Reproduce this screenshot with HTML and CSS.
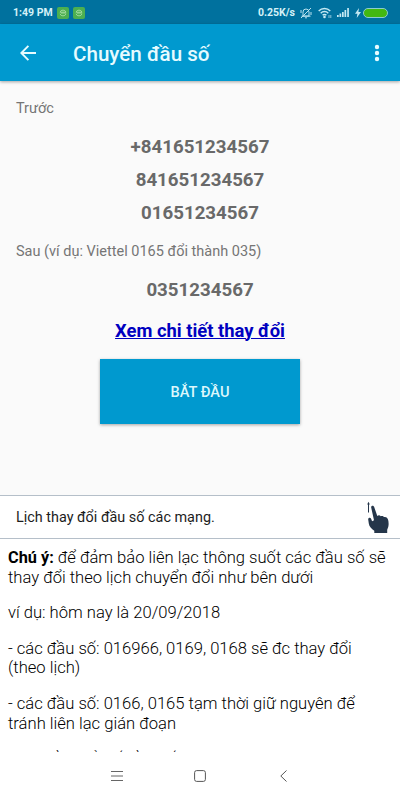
FILE: index.html
```html
<!DOCTYPE html>
<html lang="vi">
<head>
  <meta charset="UTF-8">
  <meta name="viewport" content="width=device-width, initial-scale=1.0">
  <title>Chuyển đầu số</title>
  <link rel="stylesheet" href="styles.css">
</head>
<body>
  <div class="screen">
    <div class="status-bar">
      <span class="time">1:49 PM</span>
      <svg class="app-badge" width="12" height="12" viewBox="0 0 12 12">
        <rect width="12" height="12" rx="2" fill="#4caf50"/>
        <path d="M3 5.2a3.2 3.2 0 0 1 6 0zM3 6.8a3.2 3.2 0 0 0 6 0M4 6h5" fill="none" stroke="#a5dda0" stroke-width=".9"/>
      </svg>
      <svg class="app-badge" width="12" height="12" viewBox="0 0 12 12">
        <rect width="12" height="12" rx="2" fill="#4caf50"/>
        <path d="M3 5.2a3.2 3.2 0 0 1 6 0zM3 6.8a3.2 3.2 0 0 0 6 0M4 6h5" fill="none" stroke="#a5dda0" stroke-width=".9"/>
      </svg>
      <span class="speed">0.25K/s</span>
      <svg class="mute" width="12" height="12" viewBox="0 0 12 12" fill="none" stroke="#b9e2ef">
        <path d="M3 9V5a3 3 0 0 1 6 0v4zM1.5 9.2h9M5 10.8h2M1 11L11 1M1 3v3M11 5v3"/>
      </svg>
      <svg class="wifi" width="14" height="12" viewBox="0 0 14 12" fill="none" stroke="#c5e9f3" stroke-width="1.4">
        <path d="M.7 4a8 8 0 0 1 11.6 0M2.7 6.2a5.2 5.2 0 0 1 7.6 0M4.6 8.3a2.6 2.6 0 0 1 3.8 0"/>
        <circle cx="6.5" cy="10" r=".6"/>
        <path d="M11 8v3M12.8 8v3" stroke-width=".7"/>
      </svg>
      <svg class="signal" width="12" height="9" viewBox="0 0 12 9" fill="#c5e9f3">
        <path d="M0 7h1.7v2H0zM2.5 5.5h1.7V9H2.5zM5 4h1.7v5H5zM7.5 2h1.7v7H7.5zM10.2 0h1.7v9h-1.7z"/>
      </svg>
      <svg class="bolt" width="6" height="10" viewBox="0 0 6 10" fill="#c5e9f3">
        <path d="M4 0L0 5.8h2.4L1.7 10 6 4H3.4z"/>
      </svg>
      <span class="battery"></span>
    </div>

    <div class="app-bar">
      <svg class="back" width="16" height="16" viewBox="0 0 16 16" fill="none" stroke="#e6fbff" stroke-width="1.9">
        <path d="M16 8H1.5M8.4 .8L1.3 8l7.1 7.2"/>
      </svg>
      <h1>Chuyển đầu số</h1>
      <svg class="more" width="6" height="18" viewBox="0 0 6 18" fill="#e6fbff">
        <circle cx="3" cy="3" r="2.2"/>
        <circle cx="3" cy="9" r="2.2"/>
        <circle cx="3" cy="15" r="2.2"/>
      </svg>
    </div>

    <div class="content">
      <p class="label">Trước</p>
      <p class="number first">+841651234567</p>
      <p class="number">841651234567</p>
      <p class="number">01651234567</p>
      <p class="label after">Sau (ví dụ: Viettel 0165 đổi thành 035)</p>
      <p class="number result">0351234567</p>
      <a class="detail" href="#">Xem chi tiết thay đổi</a>
      <button type="button">BẮT ĐẦU</button>
    </div>

    <div class="schedule">
      <span>Lịch thay đổi đầu số các mạng.</span>
      <svg width="22" height="33" viewBox="0 0 22 33" fill="#25364a">
        <path d="M.2 3.4L1.5.8l1.3 2.6H2v8.2H1V3.4z"/>
        <path d="M4.2 6.6c-.5-2 2.2-2.8 2.9-.8L10.3 15c1.2-1 2.7-.8 3.4.3 1.2-.8 2.7-.4 3.3.8 1.7-.5 3.1.2 3.8 2 .7 1.7 1 4 .7 6.5-.2 1.8-.8 3-1.3 4.2V32H7.3v-2.2C4.5 28 2.2 25.5 1.8 22.5L1.2 18.5c-.2-1.8 2.3-2.3 3-.6l.9 2.3L7 19.2z"/>
      </svg>
    </div>

    <div class="notes">
      <p><b>Chú ý:</b> để đảm bảo liên lạc thông suốt các đầu số sẽ thay đổi theo lịch chuyển đổi như bên dưới</p>
      <p>ví dụ: hôm nay là 20/09/2018</p>
      <p>- các đầu số: 016966, 0169, 0168 sẽ đc thay đổi (theo lịch)</p>
      <p>- các đầu số: 0166, 0165 tạm thời giữ nguyên để tránh liên lạc gián đoạn</p>
      <p>- bên cần đổi số đầu số tới</p>
    </div>

    <div class="nav-bar">
      <svg width="12" height="12" viewBox="0 0 12 12" fill="none" stroke="#666">
        <path d="M0 1.5h12M0 6h12M0 10.5h12"/>
      </svg>
      <svg width="12" height="12" viewBox="0 0 12 12" fill="none" stroke="#555">
        <rect x=".6" y=".6" width="10.8" height="10.8" rx="2"/>
      </svg>
      <svg width="12" height="12" viewBox="0 0 12 12" fill="none" stroke="#555">
        <path d="M9.5 .5L3.8 6l5.700 5.500"/>
      </svg>
    </div>
  </div>
</body>
</html>
```
FILE: styles.css
```css
* {
  box-sizing: border-box;
}
body {
  margin: 0;
  font-family: Roboto, sans-serif;
  background-color: #fff;
}
p, h1 {
  margin: 0;
}
svg {
  flex-shrink: 0;
}
.screen {
  display: flex;
  flex-direction: column;
  width: 400px;
  height: 800px;
  overflow: hidden;
}
.status-bar {
  display: flex;
  align-items: center;
  flex-shrink: 0;
  height: 24px;
  padding: 1px 12px 0 13px;
  background-color: #00719e;
  color: #d5f1f8;
  font-size: 10.5px;
  font-weight: 700;
}
.time {
  width: 44px;
  white-space: nowrap;
}
.app-badge {
  margin-right: 4px;
}
.speed {
  margin-left: auto;
  margin-right: 5px;
}
.mute {
  margin-right: 6px;
}
.wifi {
  margin-right: 5px;
}
.signal {
  margin-right: 6px;
}
.bolt {
  margin-right: 2px;
}
.battery {
  width: 25px;
  height: 10px;
  background-color: #43b811;
  border: 1px solid #8ccbd0;
  border-radius: 5px;
}
.app-bar {
  display: flex;
  align-items: center;
  flex-shrink: 0;
  height: 57px;
  padding: 1px 20px 0;
  background-color: #0099cf;
  box-shadow: 0 1px 3px rgba(0, 0, 0, 0.35);
  z-index: 1;
}
.app-bar h1 {
  margin-left: 37px;
  padding-top: 1px;
  color: #e6fbff;
  font-size: 20.6px;
  font-weight: 500;
}
.more {
  margin-left: auto;
}
.content {
  display: flex;
  flex-direction: column;
  align-items: center;
  flex-shrink: 0;
  height: 414px;
  padding: 18px 16px 0;
  background-color: #fafafa;
}
.label {
  align-self: flex-start;
  color: #757575;
  font-size: 14.5px;
  line-height: 20px;
}
.number {
  height: 33px;
  color: #696969;
  font-size: 18.7px;
  font-weight: 700;
  line-height: 33px;
}
.number.first {
  margin-top: 12px;
}
.label.after {
  margin-top: 12px;
}
.number.result {
  margin-top: 12px;
}
.detail {
  margin-top: 9px;
  color: #0000c0;
  font-size: 18.4px;
  font-weight: 700;
  line-height: 30px;
  text-decoration-thickness: 1px;
}
button {
  width: 200px;
  height: 65px;
  margin-top: 13px;
  border: none;
  background-color: #0099cf;
  box-shadow: 0 1px 3px rgba(0, 0, 0, 0.35);
  color: #dcf7fc;
  font-family: inherit;
  font-size: 14.6px;
  font-weight: 500;
}
.schedule {
  display: flex;
  align-items: center;
  justify-content: space-between;
  flex-shrink: 0;
  height: 44px;
  padding: 0 11px 0 16px;
  border-top: 1px solid #b5bfc9;
  border-bottom: 1px solid #b5bfc9;
  color: #1c1c1c;
  font-size: 14.4px;
}
.notes {
  flex-shrink: 0;
  height: 213px;
  padding: 9px 8px 0;
  overflow: hidden;
  color: #000;
  font-size: 16.6px;
  font-weight: 300;
  line-height: 19.6px;
}
.notes p {
  margin-bottom: 16px;
}
.notes b {
  font-size: 16.3px;
  font-weight: 700;
}
.nav-bar {
  display: flex;
  align-items: center;
  justify-content: center;
  gap: 71px;
  flex-shrink: 0;
  height: 48px;
}
```
